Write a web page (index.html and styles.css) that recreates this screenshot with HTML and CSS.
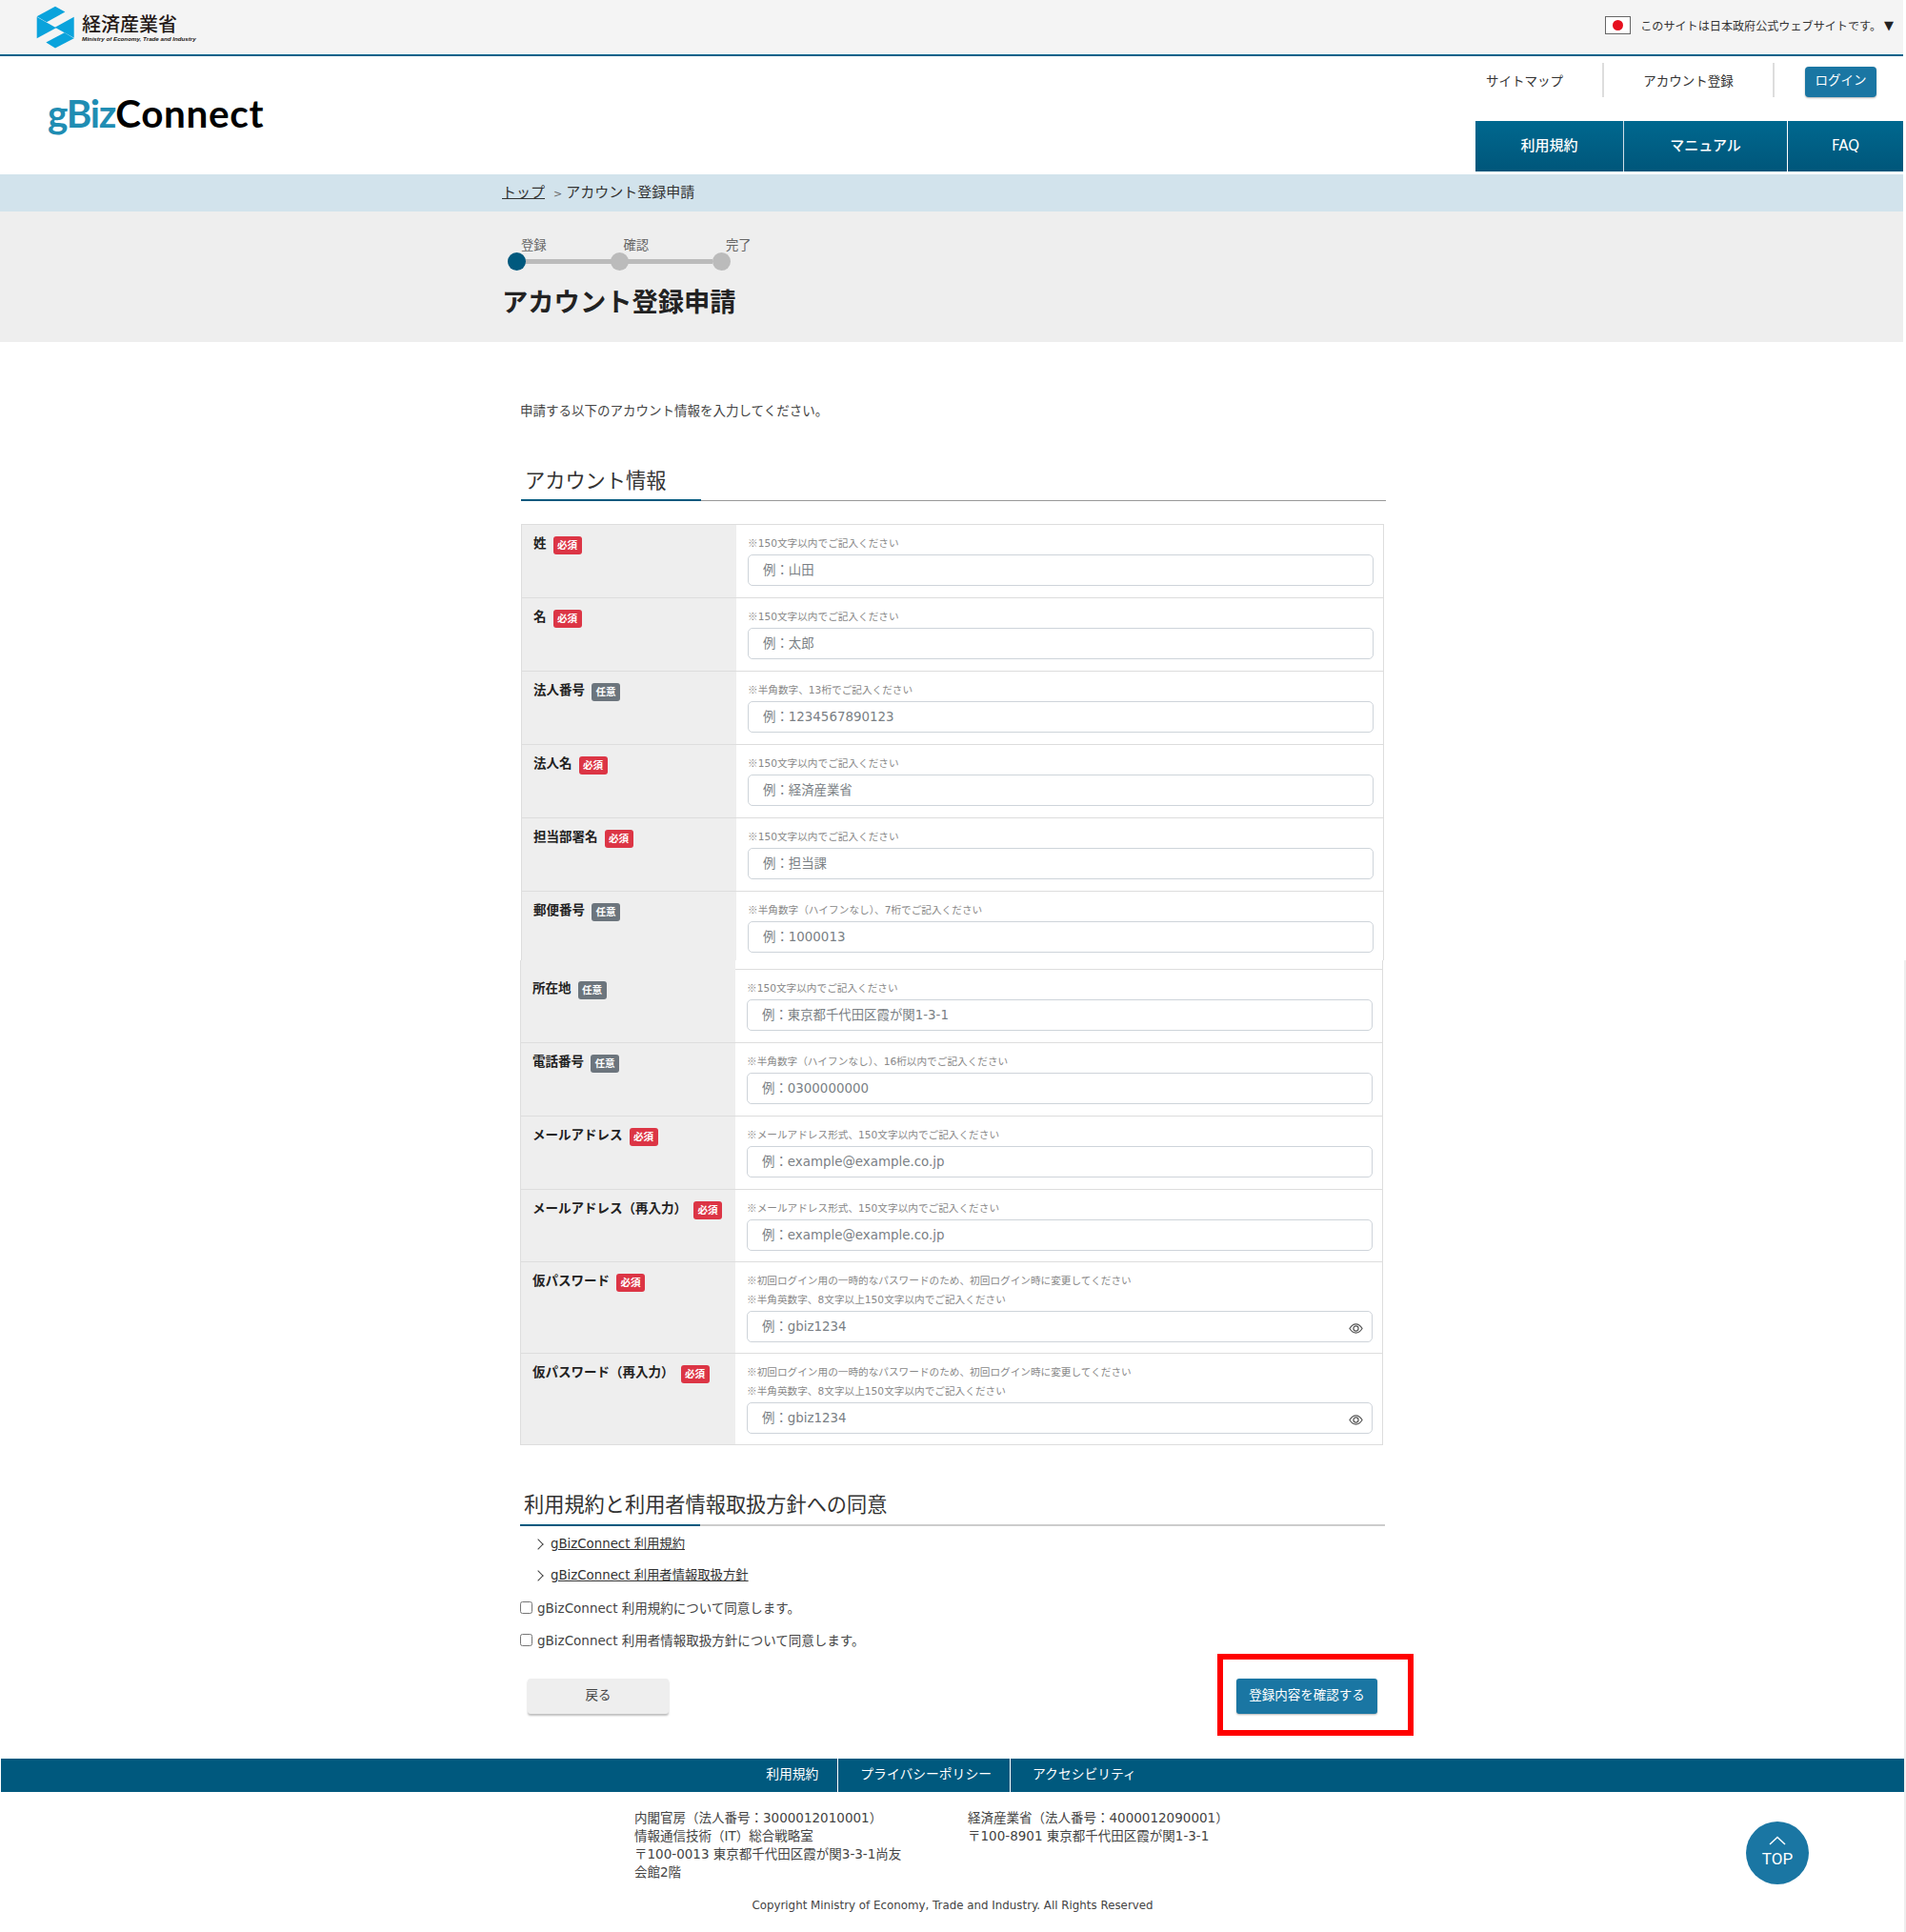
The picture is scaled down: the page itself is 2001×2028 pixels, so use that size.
FILE: index.html
```html
<!DOCTYPE html>
<html lang="ja">
<head>
    <meta charset="UTF-8">
    <title>アカウント登録申請 | gBizConnect</title>
    <link rel="stylesheet" href="styles.css">
</head>
<body>
    <div class="topbar">
        <a class="meti" href="#">
            <svg class="meti-mark" viewBox="112 18 120 134" width="40" height="45">
                <path fill="#0aa3dc" d="M114 51 172 20l31 17-58 32z"/>
                <path fill="#0aa3dc" d="M114 53l61 34-61 33z"/>
                <path fill="#0aa3dc" d="M231 53v66l-60-33z"/>
                <path fill="#0aa3dc" d="M143 133l58-31 30 18-59 31z"/>
            </svg>
            <span class="meti-name">
                <span class="meti-ja">経済産業省</span>
                <span class="meti-en">Ministry of Economy, Trade and Industry</span>
            </span>
        </a>
        <div class="gov-notice">
            <span class="flag"><span class="flag-sun"></span></span>
            <span>このサイトは日本政府公式ウェブサイトです。</span>
            <span class="gov-arrow">▼</span>
        </div>
    </div>

    <header class="header">
        <a class="logo" href="#"><span class="logo-biz">gBiz</span><span class="logo-connect">Connect</span></a>
        <div class="header-right">
            <ul class="subnav">
                <li class="subnav-map"><a href="#">サイトマップ</a></li>
                <li class="subnav-reg"><a href="#">アカウント登録</a></li>
                <li class="subnav-login"><a class="btn-login" href="#">ログイン</a></li>
            </ul>
            <ul class="mainnav">
                <li class="mainnav-terms"><a href="#">利用規約</a></li>
                <li class="mainnav-manual"><a href="#">マニュアル</a></li>
                <li class="mainnav-faq"><a href="#">FAQ</a></li>
            </ul>
        </div>
    </header>

    <div class="breadcrumb">
        <a href="#">トップ</a><span class="crumb-sep">&gt;</span><span>アカウント登録申請</span>
    </div>

    <div class="page-head">
        <div class="steps">
            <div class="step step-current"><span class="step-label">登録</span><span class="step-dot"></span></div>
            <div class="step"><span class="step-label">確認</span><span class="step-dot"></span></div>
            <div class="step"><span class="step-label">完了</span><span class="step-dot"></span></div>
        </div>
        <h1>アカウント登録申請</h1>
    </div>

    <main class="content">
        <p class="intro">申請する以下のアカウント情報を入力してください。</p>

        <div class="upper">
            <h2 class="section-title"><span>アカウント情報</span></h2>
            <div class="form-table">
                <div class="row">
                    <div class="row-label">姓<span class="badge badge-req">必須</span></div>
                    <div class="row-field">
                        <p class="hint"><span class="mark">※</span>150文字以内でご記入ください</p>
                        <input class="text-input" type="text" placeholder="例：山田">
                    </div>
                </div>
                <div class="row">
                    <div class="row-label">名<span class="badge badge-req">必須</span></div>
                    <div class="row-field">
                        <p class="hint"><span class="mark">※</span>150文字以内でご記入ください</p>
                        <input class="text-input" type="text" placeholder="例：太郎">
                    </div>
                </div>
                <div class="row">
                    <div class="row-label">法人番号<span class="badge badge-opt">任意</span></div>
                    <div class="row-field">
                        <p class="hint"><span class="mark">※</span>半角数字、13桁でご記入ください</p>
                        <input class="text-input" type="text" placeholder="例：1234567890123">
                    </div>
                </div>
                <div class="row">
                    <div class="row-label">法人名<span class="badge badge-req">必須</span></div>
                    <div class="row-field">
                        <p class="hint"><span class="mark">※</span>150文字以内でご記入ください</p>
                        <input class="text-input" type="text" placeholder="例：経済産業省">
                    </div>
                </div>
                <div class="row">
                    <div class="row-label">担当部署名<span class="badge badge-req">必須</span></div>
                    <div class="row-field">
                        <p class="hint"><span class="mark">※</span>150文字以内でご記入ください</p>
                        <input class="text-input" type="text" placeholder="例：担当課">
                    </div>
                </div>
                <div class="row row-cut">
                    <div class="row-label">郵便番号<span class="badge badge-opt">任意</span></div>
                    <div class="row-field">
                        <p class="hint"><span class="mark">※</span>半角数字（ハイフンなし）、7桁でご記入ください</p>
                        <input class="text-input" type="text" placeholder="例：1000013">
                    </div>
                </div>
            </div>
        </div>

        <div class="form-table form-table-lower">
            <div class="row row-rest">
                <div class="row-label"></div>
                <div class="row-field"></div>
            </div>
            <div class="row">
                <div class="row-label">所在地<span class="badge badge-opt">任意</span></div>
                <div class="row-field">
                    <p class="hint"><span class="mark">※</span>150文字以内でご記入ください</p>
                    <input class="text-input" type="text" placeholder="例：東京都千代田区霞が関1-3-1">
                </div>
            </div>
            <div class="row">
                <div class="row-label">電話番号<span class="badge badge-opt">任意</span></div>
                <div class="row-field">
                    <p class="hint"><span class="mark">※</span>半角数字（ハイフンなし）、16桁以内でご記入ください</p>
                    <input class="text-input" type="text" placeholder="例：0300000000">
                </div>
            </div>
            <div class="row">
                <div class="row-label">メールアドレス<span class="badge badge-req">必須</span></div>
                <div class="row-field">
                    <p class="hint"><span class="mark">※</span>メールアドレス形式、150文字以内でご記入ください</p>
                    <input class="text-input" type="text" placeholder="例：example@example.co.jp">
                </div>
            </div>
            <div class="row row-short">
                <div class="row-label">メールアドレス（再入力）<span class="badge badge-req">必須</span></div>
                <div class="row-field">
                    <p class="hint"><span class="mark">※</span>メールアドレス形式、150文字以内でご記入ください</p>
                    <input class="text-input" type="text" placeholder="例：example@example.co.jp">
                </div>
            </div>
            <div class="row">
                <div class="row-label">仮パスワード<span class="badge badge-req">必須</span></div>
                <div class="row-field">
                    <p class="hint"><span class="mark">※</span>初回ログイン用の一時的なパスワードのため、初回ログイン時に変更してください</p>
                    <p class="hint hint-last"><span class="mark">※</span>半角英数字、8文字以上150文字以内でご記入ください</p>
                    <div class="password">
                        <input class="text-input" type="text" placeholder="例：gbiz1234">
                        <svg class="eye" viewBox="0 0 16 12" width="15" height="11">
                            <path fill="none" stroke="#555" stroke-width="1.3" d="M.8 6C3 2.6 5.3 1 8 1s5 1.6 7.2 5C13 9.400 10.700 11 8 11S3 9.400.8 6z"/>
                            <circle fill="none" stroke="#555" stroke-width="1.3" cx="8" cy="6" r="2.800"/>
                        </svg>
                    </div>
                </div>
            </div>
            <div class="row">
                <div class="row-label">仮パスワード（再入力）<span class="badge badge-req">必須</span></div>
                <div class="row-field">
                    <p class="hint"><span class="mark">※</span>初回ログイン用の一時的なパスワードのため、初回ログイン時に変更してください</p>
                    <p class="hint hint-last"><span class="mark">※</span>半角英数字、8文字以上150文字以内でご記入ください</p>
                    <div class="password">
                        <input class="text-input" type="text" placeholder="例：gbiz1234">
                        <svg class="eye" viewBox="0 0 16 12" width="15" height="11">
                            <path fill="none" stroke="#555" stroke-width="1.3" d="M.8 6C3 2.6 5.3 1 8 1s5 1.6 7.2 5C13 9.400 10.700 11 8 11S3 9.400.8 6z"/>
                            <circle fill="none" stroke="#555" stroke-width="1.3" cx="8" cy="6" r="2.800"/>
                        </svg>
                    </div>
                </div>
            </div>
        </div>

        <h2 class="section-title section-title-agree"><span>利用規約と利用者情報取扱方針への同意</span></h2>
        <ul class="doc-links">
            <li><a href="#">gBizConnect 利用規約</a></li>
            <li><a href="#">gBizConnect 利用者情報取扱方針</a></li>
        </ul>
        <label class="agree"><input type="checkbox">gBizConnect 利用規約について同意します。</label>
        <label class="agree"><input type="checkbox">gBizConnect 利用者情報取扱方針について同意します。</label>

        <div class="actions">
            <a class="btn-back" href="#">戻る</a>
            <div class="confirm-wrap">
                <a class="btn-confirm" href="#">登録内容を確認する</a>
                <div class="red-frame"></div>
            </div>
        </div>
    </main>

    <footer class="footer">
        <ul class="footer-nav">
            <li><a href="#">利用規約</a></li>
            <li><a href="#">プライバシーポリシー</a></li>
            <li><a href="#">アクセシビリティ</a></li>
        </ul>
        <div class="footer-info">
            <div class="footer-col">
                内閣官房（法人番号：3000012010001）<br>
                情報通信技術（IT）総合戦略室<br>
                〒100-0013 東京都千代田区霞が関3-3-1尚友会館2階
            </div>
            <div class="footer-col">
                経済産業省（法人番号：4000012090001）<br>
                〒100-8901 東京都千代田区霞が関1-3-1
            </div>
        </div>
        <p class="copyright">Copyright Ministry of Economy, Trade and Industry. All Rights Reserved</p>
        <a class="to-top" href="#">
            <svg viewBox="0 0 18 10" width="18" height="10"><path fill="none" stroke="#fff" stroke-width="1.500" d="M1 9l8-7.500L17 9"/></svg>
            <span class="to-top-text">TOP</span>
        </a>
    </footer>
</body>
</html>
```

FILE: styles.css
```css
/* General styles */
* {
    box-sizing: border-box;
}

body {
    font-family: "DejaVu Sans", "Noto Sans CJK JP", sans-serif;
    font-size: 13.5px;
    color: #333;
    background: #fff linear-gradient(#eee, #eee) no-repeat 1999px 1008px / 2px 100%;
    margin: 0;
    padding: 0;
}

a {
    color: inherit;
    text-decoration: none;
}

ul {
    list-style: none;
    margin: 0;
    padding: 0;
}

/* Government bar */
.topbar {
    height: 59px;
    width: 1998px;
    background-color: #f4f4f4;
    border-bottom: 2px solid #00628a;
    display: flex;
    justify-content: space-between;
    padding-left: 38px;
}

.meti {
    display: flex;
    padding-top: 6px;
    gap: 8px;
}

.meti-name {
    display: flex;
    flex-direction: column;
    color: #231815;
}

.meti-ja {
    font-family: "Noto Sans CJK JP", sans-serif;
    font-size: 20px;
    font-weight: 500;
    line-height: 24px;
    margin-top: 7px;
}

.meti-en {
    font-family: "Liberation Sans", sans-serif;
    font-size: 6.2px;
    font-style: italic;
    font-weight: bold;
    line-height: 8px;
    white-space: nowrap;
}

.gov-notice {
    display: flex;
    align-items: center;
    height: 52px;
    padding-right: 10px;
    font-size: 12.1px;
    color: #333;
}

.flag {
    width: 27px;
    height: 19px;
    border: 1px solid #666;
    background-color: #fff;
    display: flex;
    align-items: center;
    justify-content: center;
    margin-right: 10px;
}

.flag-sun {
    width: 11px;
    height: 11px;
    border-radius: 50%;
    background-color: #e60f1e;
}

.gov-arrow {
    color: #222;
    margin-left: 3px;
    font-size: 13px;
}

/* Site header */
.header {
    height: 124px;
    width: 1998px;
    display: flex;
    justify-content: space-between;
}

.logo {
    font-family: Lato, sans-serif;
    font-size: 40.4px;
    font-weight: bold;
    line-height: 50px;
    color: #000;
    margin: 35px 0 0 50px;
}

.logo-biz {
    color: #1f8db3;
    letter-spacing: -1.2px;
}

.logo-connect {
    letter-spacing: 0.7px;
}

.header-right {
    width: 449px;
    display: flex;
    flex-direction: column;
}

.subnav {
    display: flex;
    align-items: center;
    height: 68px;
    padding-bottom: 18px;
    position: relative;
}

.subnav li {
    display: flex;
    align-items: center;
    height: 36px;
    font-size: 13.5px;
    color: #333;
}

.subnav-map {
    width: 135px;
    padding-left: 11px;
    border-right: 2px solid #ddd;
}

.subnav-reg {
    width: 179px;
    justify-content: center;
    border-right: 2px solid #ddd;
}

.subnav-login {
    padding-left: 32px;
}

.btn-login {
    display: block;
    width: 75px;
    height: 32px;
    margin-top: 3px;
    line-height: 28px;
    text-align: center;
    color: #fff;
    background-color: #1a76a3;
    border-radius: 4px;
    box-shadow: 0 1px 2px rgba(0, 0, 0, 0.3);
}

.mainnav {
    display: flex;
    height: 53px;
}

.mainnav li {
    background: linear-gradient(#00688f, #00567a);
    color: #fff;
    font-size: 15px;
    font-weight: 500;
    text-align: center;
    line-height: 52px;
}

.mainnav-terms {
    width: 156px;
    border-right: 1px solid #cfe0e8;
}

.mainnav-manual {
    width: 172px;
    border-right: 1px solid #fff;
}

.mainnav-faq {
    width: 121px;
}

/* Breadcrumb */
.breadcrumb {
    height: 39px;
    width: 1998px;
    background-color: #d2e3ec;
    padding-left: 527px;
    font-size: 15px;
    line-height: 38px;
    color: #333;
}

.breadcrumb a {
    text-decoration: underline;
}

.crumb-sep {
    color: #666;
    font-size: 11px;
    margin: 0 4px 0 9px;
}

/* Page heading with steps */
.page-head {
    height: 137px;
    width: 1998px;
    background-color: #eee;
    padding: 25px 0 0 527px;
}

.steps {
    display: flex;
    margin-left: 6px;
}

.step {
    width: 107.5px;
    display: flex;
    flex-direction: column;
    background: linear-gradient(#bbb, #bbb) no-repeat 0 25px / 100% 5px;
}

.step:last-child {
    background: none;
}

.step-label {
    font-size: 13.33px;
    line-height: 18px;
    color: #666;
    padding-left: 14px;
    height: 18px;
    margin-top: 2px;
}

.step-dot {
    width: 19px;
    height: 19px;
    border-radius: 50%;
    background-color: #bbb;
    margin-top: -2px;
}

.step-current .step-dot {
    background-color: #00597e;
}

h1 {
    font-size: 27.3px;
    font-weight: bold;
    line-height: 40px;
    color: #222;
    margin: 14px 0 0;
}

/* Main column */
.content {
    width: 910px;
    margin-left: 546px;
}

.intro {
    margin: 62px 0 0;
    line-height: 20px;
    color: #444;
}

.upper {
    margin-left: 1px;
}

.section-title {
    font-size: 21.2px;
    font-weight: normal;
    line-height: 31px;
    color: #333;
    margin: 48px 0 0;
    padding: 0 0 5px 4px;
    width: 908px;
    height: 37px;
    border-bottom: 1px solid #999;
    position: relative;
}

.section-title::after {
    content: "";
    position: absolute;
    left: 0;
    bottom: -1px;
    width: 189px;
    height: 2px;
    background-color: #00597e;
}

.section-title-agree {
    margin-top: 47px;
    border-bottom: 2px solid #ccc;
    height: 38px;
}

.section-title-agree::after {
    bottom: -2px;
}

/* Form table */
.form-table {
    width: 906px;
    margin-top: 24px;
    border-left: 1px solid #ddd;
    border-right: 1px solid #ddd;
    border-top: 1px solid #ddd;
}

.form-table-lower {
    width: 906px;
    margin-top: 0;
    border-top: 0;
    border-bottom: 1px solid #ddd;
}

.row {
    display: flex;
    height: 77px;
    border-top: 1px solid #ddd;
}

.row:first-child {
    border-top: 0;
    height: 76px;
}

.row:has(.hint-last) {
    height: 96px;
}

.row-short {
    height: 76px;
}

.row-cut {
    height: 73px;
    overflow: hidden;
}

.form-table-lower .row-rest {
    height: 9px;
    border-top: 0;
}

.row-label {
    width: 225px;
    flex-shrink: 0;
    background-color: #eee;
    padding: 10px 0 0 12px;
    font-weight: bold;
    line-height: 19px;
    color: #222;
}

.row-field {
    flex: 1;
    padding: 9px 10px 0 12px;
}

.hint {
    font-size: 10.65px;
    line-height: 19px;
    color: #888;
    margin: 0 0 2px;
}

.hint:has(+ .hint-last) {
    margin-bottom: 0;
}

.hint-last {
    margin-bottom: 2px;
}

.mark {
    font-family: "Noto Sans CJK JP", sans-serif;
}

.badge {
    display: inline-block;
    width: 30px;
    height: 19px;
    margin-left: 7px;
    border-radius: 3px;
    color: #fff;
    font-size: 10.6px;
    font-weight: bold;
    line-height: 18px;
    text-align: center;
    vertical-align: top;
    margin-top: 2px;
}

.badge-req {
    background-color: #dc3545;
}

.badge-opt {
    background-color: #6c757d;
}

.text-input {
    display: block;
    width: 100%;
    height: 33px;
    padding: 0 15px;
    border: 1px solid #ced4da;
    border-radius: 5px;
    font: inherit;
    font-size: 13.4px;
    color: #333;
    background-color: #fff;
}

.text-input::placeholder {
    color: #7a7f85;
    opacity: 1;
}

.password {
    position: relative;
}

.eye {
    position: absolute;
    right: 10px;
    top: 13px;
}

/* Agreement */
.doc-links {
    margin-top: 2px;
    font-size: 13.33px;
}

.doc-links li {
    height: 33px;
    line-height: 33px;
    padding-left: 32px;
    position: relative;
}

.doc-links li::before {
    content: "";
    position: absolute;
    left: 15px;
    top: 13px;
    width: 7px;
    height: 7px;
    border-top: 1px solid #444;
    border-right: 1px solid #444;
    transform: rotate(45deg);
}

.doc-links a {
    text-decoration: underline;
}

.agree {
    display: flex;
    align-items: center;
    height: 34px;
    color: #444;
}

.agree input {
    width: 13px;
    height: 13px;
    margin: 0 5px 0 0;
    flex-shrink: 0;
}

.actions {
    display: flex;
    justify-content: space-between;
    align-items: flex-start;
    width: 892px;
    margin: 24px 0 0 8px;
}

.btn-back,
.btn-confirm {
    display: block;
    width: 148px;
    height: 37px;
    line-height: 34px;
    text-align: center;
    font-size: 13.5px;
    border-radius: 3px;
}

.btn-back {
    background-color: #eee;
    color: #444;
    box-shadow: 0 2px 2px rgba(0, 0, 0, 0.25);
}

.btn-confirm {
    background-color: #1a76a3;
    color: #fff;
    box-shadow: 0 1px 2px rgba(0, 0, 0, 0.3);
}

/* Annotation laid over the confirm button */
.confirm-wrap {
    position: relative;
}

.red-frame {
    position: absolute;
    left: -20px;
    top: -26px;
    width: 206px;
    height: 86px;
    border: 6px solid #f00;
}

/* Footer */
.footer {
    margin-top: 47px;
    height: 182px;
    position: relative;
    color: #444;
}

.footer-nav {
    display: flex;
    justify-content: center;
    height: 35px;
    width: 1998px;
    margin-left: 1px;
    background-color: #00597e;
    color: #fff;
    font-size: 13.8px;
    line-height: 33px;
    padding-left: 16px;
}

.footer-nav li {
    padding: 0 19px 0 23px;
    border-right: 1px solid #fff;
}

.footer-nav li:first-child {
    padding-left: 0;
    padding-right: 20px;
}

.footer-nav li:last-child {
    border-right: 0;
}

.footer-info {
    display: flex;
    margin: 18px 0 0 666px;
    line-height: 19px;
    font-size: 13.5px;
}

.footer-col {
    width: 350px;
    padding-right: 60px;
}

.footer-col:last-child {
    width: 400px;
    padding-right: 0;
}

.copyright {
    margin: 16px 0 0;
    width: 2000px;
    text-align: center;
    font-size: 11.85px;
    line-height: 19px;
}

.to-top {
    position: absolute;
    left: 1833px;
    top: 66px;
    width: 66px;
    height: 66px;
    border-radius: 50%;
    background-color: #1a76a3;
    color: #fff;
    display: flex;
    flex-direction: column;
    align-items: center;
    padding-top: 15px;
    font-family: Roboto, sans-serif;
    font-size: 17px;
    line-height: 22px;
}

.to-top-text {
    margin-top: 3px;
}
```
